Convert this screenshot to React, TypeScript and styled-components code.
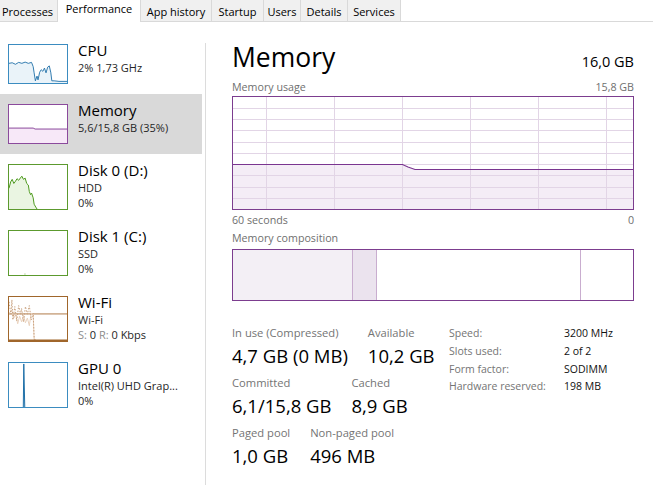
import React from 'react';
import styled, { createGlobalStyle } from 'styled-components';

const GlobalStyle = createGlobalStyle`
  html, body { margin: 0; padding: 0; background: #fff; }
  body { font-family: 'Open Sans', 'Noto Sans', sans-serif; color: #000; }
  * { box-sizing: border-box; }
`;

const Window = styled.div`
  width: 653px;
  height: 496px;
  overflow: hidden;
  background: #fff;
  display: flex;
  flex-direction: column;
`;

const TabBar = styled.div`
  display: flex;
  height: 22px;
  flex-shrink: 0;
  border-bottom: 1px solid #d9d9d9;
`;

const Tab = styled.div<{ $active?: boolean; $w: number; $pl?: number }>`
  width: ${p => p.$w}px;
  height: ${p => (p.$active ? 22 : 21)}px;
  background: ${p => (p.$active ? '#fff' : '#f0f0f0')};
  border-right: 1px solid #d9d9d9;
  font-size: 11px;
  line-height: 16px;
  padding-top: ${p => (p.$active ? 1 : 4)}px;
  padding-left: ${p => p.$pl ?? 0}px;
  text-align: ${p => (p.$pl !== undefined ? 'left' : 'center')};
  white-space: nowrap;
  color: #000;
`;

const Body = styled.div`
  display: flex;
  flex: 1;
  min-height: 0;
`;

const Sidebar = styled.div`
  width: 202px;
  padding-top: 12px;
  display: flex;
  flex-direction: column;
  flex-shrink: 0;
`;

const Divider = styled.div`
  width: 1px;
  height: 442px;
  margin: 21px 0 0 3px;
  background: #dcdcdc;
  flex-shrink: 0;
`;

const Row = styled.div<{ $selected?: boolean; $h: number }>`
  display: flex;
  gap: 10px;
  height: ${p => p.$h}px;
  padding: 10px 0 0 8px;
  background: ${p => (p.$selected ? '#d9d9d9' : 'transparent')};
`;

const Thumb = styled.div<{ $color: string; $h: number }>`
  width: 60px;
  height: ${p => p.$h}px;
  border: 1px solid ${p => p.$color};
  background: #fff;
  flex-shrink: 0;
  svg { display: block; width: 100%; height: 100%; }
`;

const ItemText = styled.div`
  display: flex;
  flex-direction: column;
  margin-top: -3px;
`;

const ItemTitle = styled.div`
  font-size: 15px;
  line-height: 19px;
  color: #000;
  white-space: nowrap;
`;

const ItemSub = styled.div`
  font-size: 11px;
  line-height: 15px;
  color: #262626;
  white-space: nowrap;
`;

const Dim = styled.span`
  color: #8c8c8c;
`;

const Content = styled.div`
  flex: 1;
  padding: 0 20px 0 26px;
  display: flex;
  flex-direction: column;
`;

const Header = styled.div`
  display: flex;
  justify-content: space-between;
  align-items: baseline;
  margin-top: 19px;
`;

const Title = styled.div`
  font-size: 26.5px;
  line-height: 32px;
  color: #000;
`;

const Total = styled.div`
  font-size: 14.5px;
  color: #000;
`;

const Caption = styled.div<{ $mt: number }>`
  display: flex;
  justify-content: space-between;
  font-size: 10.7px;
  line-height: 14px;
  color: #6f6f6f;
  margin-top: ${p => p.$mt}px;
  white-space: nowrap;
`;

const ChartBox = styled.div`
  margin-top: 2px;
  height: 114px;
  svg { display: block; }
`;

const CompBar = styled.div`
  display: flex;
  height: 52px;
  margin-top: 4px;
  border: 1px solid #7c3d8f;
`;

const CompSeg = styled.div<{ $w?: number; $bg: string; $divider?: boolean }>`
  ${p => (p.$w ? `width: ${p.$w}px; flex-shrink: 0;` : 'flex: 1;')}
  background: ${p => p.$bg};
  border-right: ${p => (p.$divider ? '1px solid #c9adcf' : 'none')};
`;

const Stats = styled.div`
  display: flex;
  margin-top: 24px;
`;

const StatGroups = styled.div`
  width: 217px;
  display: flex;
  flex-direction: column;
  gap: 7px;
  flex-shrink: 0;
`;

const StatRow = styled.div`
  display: flex;
  gap: 20px;
`;

const Stat = styled.div`
  display: flex;
  flex-direction: column;
  gap: 3px;
`;

const StatLabel = styled.div`
  font-size: 11.2px;
  line-height: 16px;
  color: #747474;
  white-space: nowrap;
`;

const StatValue = styled.div`
  font-size: 18.5px;
  line-height: 24px;
  color: #000;
  white-space: nowrap;
`;

const Specs = styled.div`
  display: grid;
  grid-template-columns: 115px auto;
  font-size: 10.5px;
  line-height: 17.8px;
  align-content: start;
`;

const SpecLabel = styled.div`
  color: #747474;
  white-space: nowrap;
`;

const SpecValue = styled.div`
  color: #111;
  white-space: nowrap;
`;

const CpuGraph = () => (
  <svg viewBox="0 0 60 40" preserveAspectRatio="none">
    <polygon
      points="0,19.3 3.3,18.7 6.7,20.3 10,18.3 13.3,19.3 16.7,18 20,19.3 23.3,18.3 25,22.7 26,29.3 27.3,37.7 29,32.7 30,36.7 31.7,28.7 33.3,26 35,27.7 36.7,24.3 38.3,29.3 40,23.3 41.7,22 43.3,29.3 44.3,37.7 46.7,37.7 51.7,38.3 60,38.3 60,40 0,40"
      fill="#eaf3f9"
    />
    <polyline
      points="0,19.3 3.3,18.7 6.7,20.3 10,18.3 13.3,19.3 16.7,18 20,19.3 23.3,18.3 25,22.7 26,29.3 27.3,37.7 29,32.7 30,36.7 31.7,28.7 33.3,26 35,27.7 36.7,24.3 38.3,29.3 40,23.3 41.7,22 43.3,29.3 44.3,37.7 46.7,37.7 51.7,38.3 60,38.3"
      fill="none"
      stroke="#1f6fa8"
      strokeWidth="0.9"
      vectorEffect="non-scaling-stroke"
    />
  </svg>
);

const MemGraph = () => (
  <svg viewBox="0 0 60 40" preserveAspectRatio="none">
    <polygon points="0,24.3 25,24.3 27,25.3 60,25.3 60,40 0,40" fill="#f7e8f8" />
    <polyline
      points="0,24.3 25,24.3 27,25.3 60,25.3"
      fill="none"
      stroke="#8b4a9c"
      strokeWidth="1"
      vectorEffect="non-scaling-stroke"
    />
  </svg>
);

const diskPts =
  '0,24.3 1.7,17.7 3.3,15 5,19.3 6.7,17 8.3,14.3 10,16 11.7,13.7 13.3,11.7 15,15 16.7,13.7 18.3,19.3 20,21 21,27.7 22.3,31 23.3,29.3 25,34.3 26,41 27.7,44 29,46';

const DiskGraph = ({ active }: { active?: boolean }) => (
  <svg viewBox="0 0 60 46" preserveAspectRatio="none">
    {active ? (
      <>
        <polygon points={`${diskPts} 0,46`} fill="#eaf5e2" />
        <polyline
          points={diskPts}
          fill="none"
          stroke="#4d9a1e"
          strokeWidth="1"
          vectorEffect="non-scaling-stroke"
        />
      </>
    ) : (
      <rect x="16" y="44.5" width="1" height="1" fill="#7aae52" />
    )}
  </svg>
);

const WifiGraph = () => (
  <svg viewBox="0 0 60 46" preserveAspectRatio="none">
    <polyline
      points="0,17.7 60,17.7"
      fill="none"
      stroke="#b07a48"
      strokeWidth="1"
      vectorEffect="non-scaling-stroke"
    />
    <polyline
      points="0,17 3,14 5,22 7,18 9,28 11,20 13,26 15,19 17,27 19,22 21,30 23,17 25,18 26,45"
      fill="none"
      stroke="#ead3bf"
      strokeWidth="1"
      vectorEffect="non-scaling-stroke"
    />
    <polyline
      points="0,5 2,18 3,3 4,24 6,10 8,25 10,9 12,18 13,12 15,26 17,10 19,18 21,9 23,24 25,17 26,42 27,45"
      fill="none"
      stroke="#c9a27f"
      strokeWidth="1"
      strokeDasharray="1.5 1.5"
      vectorEffect="non-scaling-stroke"
    />
    <polyline
      points="0,45.3 60,45.3"
      fill="none"
      stroke="#a0662b"
      strokeWidth="1.5"
      vectorEffect="non-scaling-stroke"
    />
  </svg>
);

const GpuGraph = () => (
  <svg viewBox="0 0 60 46" preserveAspectRatio="none">
    <polygon points="14.8,46 15.3,1 16.3,46" fill="#dcebf5" />
    <polyline
      points="14.8,46 15.3,1 16.3,46"
      fill="none"
      stroke="#1f6fa8"
      strokeWidth="1"
      vectorEffect="non-scaling-stroke"
    />
  </svg>
);

const UsageChart = () => {
  const vx = [34.5, 102.5, 170.5, 238.5, 306.5, 374.5];
  const hy = [12.5, 23.5, 34.5, 46.5, 57.5, 68.5, 79.5, 91.5, 102.5];
  const line = '0.5,68.5 170.5,68.5 176,71 183,73.5 401.5,73.5';
  return (
    <svg width="402" height="114" viewBox="0 0 402 114">
      <polygon points={`${line} 401.5,113.5 0.5,113.5`} fill="#f4edf6" />
      {vx.map(x => (
        <line key={`v${x}`} x1={x} y1={0} x2={x} y2={114} stroke="#e2d5e6" strokeWidth="1" />
      ))}
      {hy.map(y => (
        <line key={`h${y}`} x1={0} y1={y} x2={402} y2={y} stroke="#e2d5e6" strokeWidth="1" />
      ))}
      <polyline points={line} fill="none" stroke="#7a3590" strokeWidth="1.2" />
      <rect x="0.5" y="0.5" width="401" height="113" fill="none" stroke="#7c3d8f" strokeWidth="1" />
    </svg>
  );
};

const tabs = [
  { label: 'Processes', w: 58, pl: 2 },
  { label: 'Performance', w: 83, active: true },
  { label: 'App history', w: 71 },
  { label: 'Startup', w: 52 },
  { label: 'Users', w: 37 },
  { label: 'Details', w: 47 },
  { label: 'Services', w: 53 },
];

export default function App() {
  return (
    <>
      <GlobalStyle />
      <Window>
        <TabBar>
          {tabs.map(t => (
            <Tab key={t.label} $w={t.w} $active={t.active} $pl={t.pl}>
              {t.label}
            </Tab>
          ))}
        </TabBar>
        <Body>
          <Sidebar>
            <Row $h={60}>
              <Thumb $color="#3b8cc0" $h={40}>
                <CpuGraph />
              </Thumb>
              <ItemText>
                <ItemTitle>CPU</ItemTitle>
                <ItemSub>2% 1,73 GHz</ItemSub>
              </ItemText>
            </Row>
            <Row $h={60} $selected>
              <Thumb $color="#8b4a9c" $h={40}>
                <MemGraph />
              </Thumb>
              <ItemText>
                <ItemTitle>Memory</ItemTitle>
                <ItemSub>5,6/15,8 GB (35%)</ItemSub>
              </ItemText>
            </Row>
            <Row $h={66}>
              <Thumb $color="#5c9a2e" $h={46}>
                <DiskGraph active />
              </Thumb>
              <ItemText>
                <ItemTitle>Disk 0 (D:)</ItemTitle>
                <ItemSub>HDD</ItemSub>
                <ItemSub>0%</ItemSub>
              </ItemText>
            </Row>
            <Row $h={66}>
              <Thumb $color="#5c9a2e" $h={46}>
                <DiskGraph />
              </Thumb>
              <ItemText>
                <ItemTitle>Disk 1 (C:)</ItemTitle>
                <ItemSub>SSD</ItemSub>
                <ItemSub>0%</ItemSub>
              </ItemText>
            </Row>
            <Row $h={66}>
              <Thumb $color="#a0662b" $h={46}>
                <WifiGraph />
              </Thumb>
              <ItemText>
                <ItemTitle>Wi-Fi</ItemTitle>
                <ItemSub>Wi-Fi</ItemSub>
                <ItemSub>
                  <Dim>S:</Dim> 0 <Dim>R:</Dim> 0 Kbps
                </ItemSub>
              </ItemText>
            </Row>
            <Row $h={66}>
              <Thumb $color="#3b8cc0" $h={46}>
                <GpuGraph />
              </Thumb>
              <ItemText>
                <ItemTitle>GPU 0</ItemTitle>
                <ItemSub>Intel(R) UHD Grap...</ItemSub>
                <ItemSub>0%</ItemSub>
              </ItemText>
            </Row>
          </Sidebar>
          <Divider />
          <Content>
            <Header>
              <Title>Memory</Title>
              <Total>16,0 GB</Total>
            </Header>
            <Caption $mt={7}>
              <span>Memory usage</span>
              <span>15,8 GB</span>
            </Caption>
            <ChartBox>
              <UsageChart />
            </ChartBox>
            <Caption $mt={3}>
              <span>60 seconds</span>
              <span>0</span>
            </Caption>
            <Caption $mt={4}>
              <span>Memory composition</span>
            </Caption>
            <CompBar>
              <CompSeg $w={120} $bg="#f3eff5" $divider />
              <CompSeg $w={24} $bg="#ebe3ee" $divider />
              <CompSeg $w={204} $bg="#fff" $divider />
              <CompSeg $bg="#fff" />
            </CompBar>
            <Stats>
              <StatGroups>
                <StatRow>
                  <Stat>
                    <StatLabel>In use (Compressed)</StatLabel>
                    <StatValue>4,7 GB (0 MB)</StatValue>
                  </Stat>
                  <Stat>
                    <StatLabel>Available</StatLabel>
                    <StatValue>10,2 GB</StatValue>
                  </Stat>
                </StatRow>
                <StatRow>
                  <Stat>
                    <StatLabel>Committed</StatLabel>
                    <StatValue>6,1/15,8 GB</StatValue>
                  </Stat>
                  <Stat>
                    <StatLabel>Cached</StatLabel>
                    <StatValue>8,9 GB</StatValue>
                  </Stat>
                </StatRow>
                <StatRow>
                  <Stat>
                    <StatLabel>Paged pool</StatLabel>
                    <StatValue>1,0 GB</StatValue>
                  </Stat>
                  <Stat>
                    <StatLabel>Non-paged pool</StatLabel>
                    <StatValue>496 MB</StatValue>
                  </Stat>
                </StatRow>
              </StatGroups>
              <Specs>
                <SpecLabel>Speed:</SpecLabel>
                <SpecValue>3200 MHz</SpecValue>
                <SpecLabel>Slots used:</SpecLabel>
                <SpecValue>2 of 2</SpecValue>
                <SpecLabel>Form factor:</SpecLabel>
                <SpecValue>SODIMM</SpecValue>
                <SpecLabel>Hardware reserved:</SpecLabel>
                <SpecValue>198 MB</SpecValue>
              </Specs>
            </Stats>
          </Content>
        </Body>
      </Window>
    </>
  );
}
